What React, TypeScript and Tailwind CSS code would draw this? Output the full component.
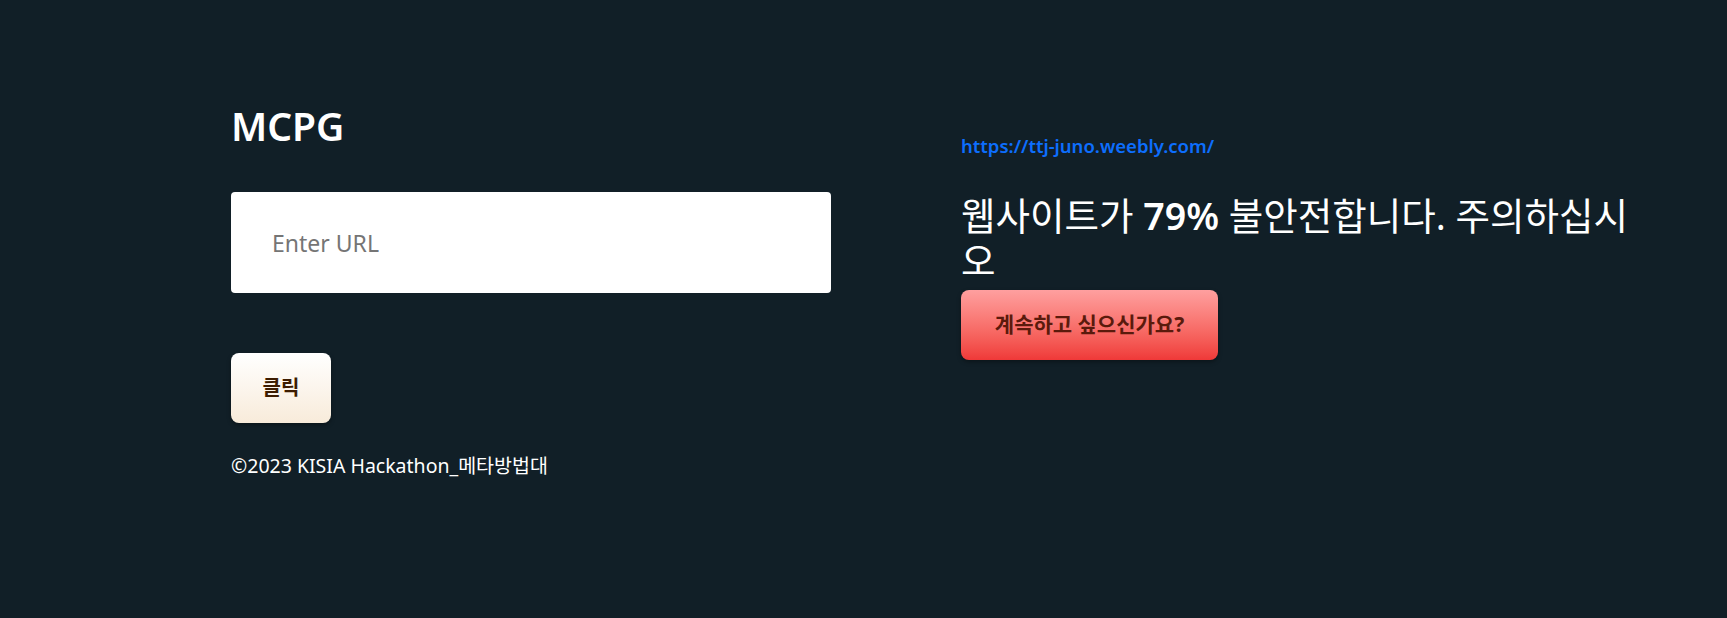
import React from 'react';

const font = { fontFamily: '"Noto Sans", "Noto Sans CJK KR", sans-serif' };

export default function App() {
  return (
    <div className="min-h-screen w-full bg-[#111f27] text-white" style={font}>
      <div className="flex pl-[231px]">
        {/* Left: URL form */}
        <div className="w-[600px] pt-[102px] flex flex-col items-start">
          <h1 className="text-[39px] leading-[48px] font-semibold text-white">MCPG</h1>
          <input
            type="text"
            placeholder="Enter URL"
            className="mt-[42px] w-[600px] h-[101px] bg-white rounded-[4px] pl-[41px] text-[23px] text-[#333] placeholder:text-[#757575] outline-none"
          />
          <button className="mt-[60px] w-[100px] h-[70px] rounded-[8px] bg-gradient-to-b from-[#ffffff] to-[#f8ebda] text-[20px] font-bold text-[#3d1c00] shadow-[0_2px_4px_rgba(0,0,0,0.35)]">
            클릭
          </button>
          <p className="mt-[29px] text-[19.5px] leading-[28px] text-white">©2023 KISIA Hackathon_메타방법대</p>
        </div>

        {/* Right: result */}
        <div className="ml-[130px] w-[690px] pt-[134px] flex flex-col items-start">
          <a href="#" className="text-[18.5px] leading-[24px] font-semibold text-[#0d6efd]">
            https://ttj-juno.weebly.com/
          </a>
          <h2 className="mt-[35px] text-[37.5px] leading-[45px] font-normal text-white">
            웹사이트가 <span className="font-semibold">79%</span> 불안전합니다. 주의하십시오
          </h2>
          <button className="mt-[7px] w-[257px] h-[70px] rounded-[8px] bg-gradient-to-b from-[#fe9f9f] to-[#ef3838] text-[21px] font-bold text-[#5a1a0c] shadow-[0_2px_4px_rgba(0,0,0,0.35)]">
            계속하고 싶으신가요?
          </button>
        </div>
      </div>
    </div>
  );
}
